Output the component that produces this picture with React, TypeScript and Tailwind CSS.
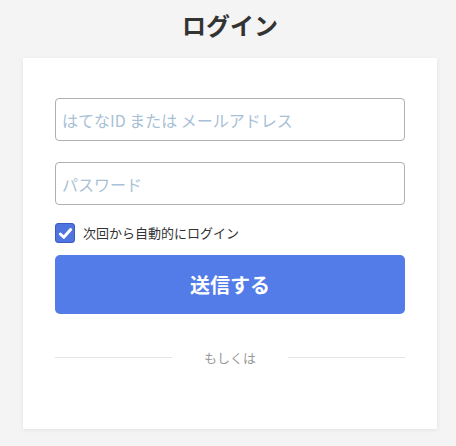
import React, { useState } from 'react';

export default function App() {
  const [remember, setRemember] = useState(true);

  return (
    <div
      className="min-h-[446px] bg-[#f4f4f4] flex flex-col items-center pl-[4px]"
      style={{ fontFamily: '"Noto Sans CJK JP", "Noto Sans", sans-serif' }}
    >
      <h1 className="text-[24px] leading-[30px] font-bold text-[#333] mt-[10px] mb-[18px]">ログイン</h1>

      <div className="w-[414px] h-[371px] bg-white shadow-[0_1px_4px_rgba(0,0,0,0.08)] px-[32px] pt-[40px]">
        <input
          type="text"
          placeholder="はてなID または メールアドレス"
          className="w-full h-[43px] border border-[#b0b0b0] rounded-[4px] px-[6px] text-[16px] text-[#333] placeholder:text-[#a9bfd6] outline-none"
        />
        <input
          type="password"
          placeholder="パスワード"
          className="w-full h-[43px] mt-[21px] border border-[#b0b0b0] rounded-[4px] px-[6px] text-[16px] text-[#333] placeholder:text-[#a9bfd6] outline-none"
        />

        <label className="flex items-center mt-[18px] cursor-pointer">
          <button
            type="button"
            onClick={() => setRemember(!remember)}
            className={`w-[20px] h-[20px] rounded-[3px] flex items-center justify-center border ${remember ? 'bg-[#4f74de] border-[#3a5bc0]' : 'bg-white border-[#999]'}`}
          >
            {remember && (
              <svg width="15" height="15" viewBox="0 0 16 16">
                <path d="M2.5 8.5 L6.2 12 L13.5 3.8" fill="none" stroke="white" strokeWidth="3.2" strokeLinecap="round" strokeLinejoin="round" />
              </svg>
            )}
          </button>
          <span className="ml-[8px] text-[13px] text-[#333] leading-[20px]">次回から自動的にログイン</span>
        </label>

        <button className="w-full h-[59px] mt-[12px] bg-[#537ce8] rounded-[5px] text-white text-[20px] font-bold">
          送信する
        </button>

        <div className="flex items-center mt-[34px]">
          <div className="flex-1 h-px bg-[#e4e4e4]" />
          <span className="w-[116px] text-center text-[13px] text-[#999]">もしくは</span>
          <div className="flex-1 h-px bg-[#e4e4e4]" />
        </div>
      </div>
    </div>
  );
}
